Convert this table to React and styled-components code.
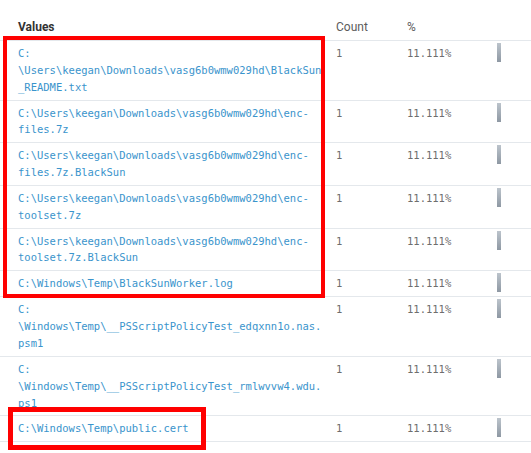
import React from 'react';
import styled, { createGlobalStyle } from 'styled-components';

const GlobalStyle = createGlobalStyle`
    html, body {
        margin: 0;
        padding: 0;
        background: #fff;
        overflow: hidden;
    }
`;

function App() {

    // rows
    const values = [
        { id: 1, path: '\\Users\\keegan\\Downloads\\vasg6b0wmw029hd\\BlackSun_README.txt' },
        { id: 2, path: '\\Users\\keegan\\Downloads\\vasg6b0wmw029hd\\enc-files.7z' },
        { id: 3, path: '\\Users\\keegan\\Downloads\\vasg6b0wmw029hd\\enc-files.7z.BlackSun' },
        { id: 4, path: '\\Users\\keegan\\Downloads\\vasg6b0wmw029hd\\enc-toolset.7z' },
        { id: 5, path: '\\Users\\keegan\\Downloads\\vasg6b0wmw029hd\\enc-toolset.7z.BlackSun' },
        { id: 6, path: '\\Windows\\Temp\\BlackSunWorker.log' },
        { id: 7, path: '\\Windows\\Temp\\__PSScriptPolicyTest_edqxnn1o.nas.psm1' },
        { id: 8, path: '\\Windows\\Temp\\__PSScriptPolicyTest_rmlwvvw4.wdu.ps1' },
        { id: 9, path: '\\Windows\\Temp\\public.cert' },
    ];

    return (
        <>
            <GlobalStyle />
            <Container>
                <Table>
                    <Head>
                        <HeadCell $first>Values</HeadCell>
                        <HeadCell>Count</HeadCell>
                        <HeadCell>%</HeadCell>
                        <HeadCell />
                    </Head>
                    {values.map((item) => (
                        <Row key={item.id}>
                            <PathCell>C:<wbr />{item.path}</PathCell>
                            <NumCell>1</NumCell>
                            <NumCell>11.111%</NumCell>
                            <BarCell>
                                <Bar />
                            </BarCell>
                        </Row>
                    ))}
                </Table>
                <Mark $left={3} $top={36} $width={322} $height={262} $border={4} />
                <Mark $left={8} $top={407} $width={198} $height={43} $border={5} />
            </Container>
        </>
    );
}

const Container = styled.div`
    position: relative;
    width: 531px;
    height: 453px;
    background: #fff;
`;
const Table = styled.div`
    display: flex;
    flex-direction: column;
`;
const Head = styled.div`
    display: grid;
    grid-template-columns: 336px 71px 90px 1fr;
    border-bottom: 1px solid #e4e8ec;
    height: 41px;
    box-sizing: border-box;
    align-items: end;
    padding-bottom: 4px;
`;
const HeadCell = styled.div`
    font-family: Roboto, "Liberation Sans", sans-serif;
    font-size: 12px;
    line-height: 17px;
    color: ${(p) => (p.$first ? '#333' : '#5c5c5c')};
    font-weight: ${(p) => (p.$first ? 700 : 400)};
    padding-left: ${(p) => (p.$first ? '18px' : '0')};
`;
const Row = styled.div`
    display: grid;
    grid-template-columns: 336px 71px 90px 1fr;
    border-bottom: 1px solid #e4e8ec;
    padding: 4px 0;
    align-items: start;
`;
const PathCell = styled.div`
    padding: 0 12px 0 18px;
    font-family: "DejaVu Sans Mono", "Liberation Mono", monospace;
    font-size: 10.5px;
    line-height: 16.85px;
    color: #3a94cc;
    overflow-wrap: break-word;
`;
const NumCell = styled.div`
    font-family: "DejaVu Sans Mono", "Liberation Mono", monospace;
    font-size: 10.5px;
    line-height: 16.85px;
    color: #6e6e6e;
`;
const BarCell = styled.div`
    padding-top: 0;
`;
const Bar = styled.div`
    width: 4px;
    height: 19px;
    margin-top: -2px;
    background: linear-gradient(#bcc4cc, #8e98a3);
`;
const Mark = styled.div`
    position: absolute;
    left: ${(p) => p.$left}px;
    top: ${(p) => p.$top}px;
    width: ${(p) => p.$width}px;
    height: ${(p) => p.$height}px;
    border: ${(p) => p.$border}px solid #ff0000;
    box-sizing: border-box;
    pointer-events: none;
`;

export default App;
